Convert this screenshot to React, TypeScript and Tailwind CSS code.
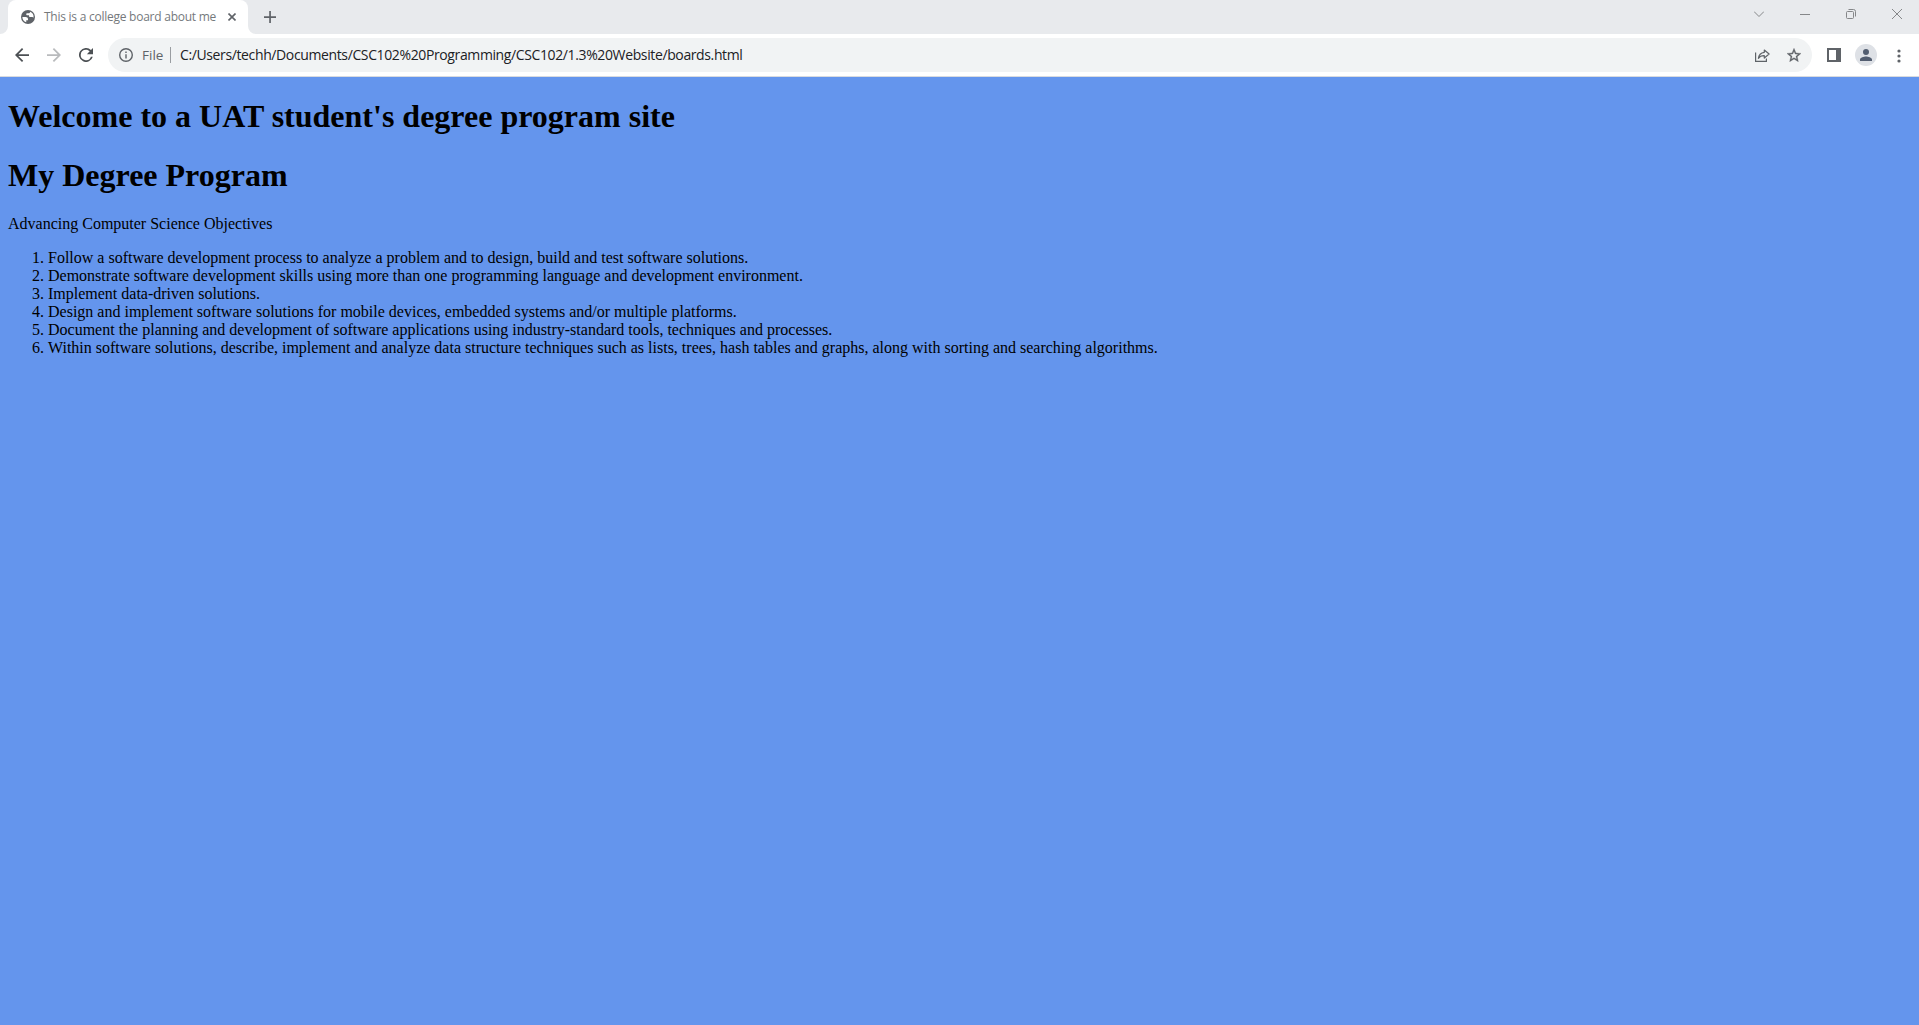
import type { ReactNode } from "react";

type IconProps = { box: string; className: string; children: ReactNode };

function Icon({ box, className, children }: IconProps) {
  return (
    <svg viewBox={box} fill="currentColor" className={`block shrink-0 ${className}`}>
      {children}
    </svg>
  );
}

const objectives = [
  "Follow a software development process to analyze a problem and to design, build and test software solutions.",
  "Demonstrate software development skills using more than one programming language and development environment.",
  "Implement data-driven solutions.",
  "Design and implement software solutions for mobile devices, embedded systems and/or multiple platforms.",
  "Document the planning and development of software applications using industry-standard tools, techniques and processes.",
  "Within software solutions, describe, implement and analyze data structure techniques such as lists, trees, hash tables and graphs, along with sorting and searching algorithms.",
];

function TabStrip() {
  return (
    <div className="flex h-[34px] items-start bg-[#e8eaed]">
      <Icon box="0 0 8 8" className="size-2 self-end text-white">
        <path d="M8 0v8H0a8 8 0 0 0 8-8z" />
      </Icon>
      <div className="flex h-full w-[240px] items-center rounded-t-lg bg-white pl-[13px]">
        <Icon box="2 2 20 20" className="size-[14px] text-[#5f6368]">
          <path
            fillRule="evenodd"
            d="M12 2a10 10 0 1 0 0 20 10 10 0 0 0 0-20zM4 12h4.5c2.4 0 3.5 1 3.5 3v1.5H9.5V19.6A8 8 0 0 1 4 12zM15 4.6A8 8 0 0 1 19.9 13c-.4-.6-1-1-1.9-1h-3c-1 0-1.5-.6-1.5-1.5V9.5H11c-.9 0-1.5-.6-1.5-1.5S10 6.5 11 6.5h2.5c1 0 1.5-.8 1.5-1.9z"
          />
        </Icon>
        <span className="ml-[9px] w-[176px] whitespace-nowrap text-[12px] leading-4 tracking-[-0.25px] text-[#75797c]">
          This is a college board about me
        </span>
        <Icon box="0 0 8 8" className="ml-2 size-2 text-[#5f6368]">
          <path d="M.5.5l7 7M7.5.5l-7 7" fill="none" stroke="currentColor" strokeWidth="1.6" />
        </Icon>
      </div>
      <Icon box="0 0 8 8" className="size-2 self-end text-white">
        <path d="M0 0v8h8a8 8 0 0 1-8-8z" />
      </Icon>
      <Icon box="0 0 12 12" className="ml-2 mt-[11px] size-3 text-[#5f6368]">
        <path d="M5.2 0h1.7v5.2H12v1.7H6.9V12H5.2V6.9H0V5.2h5.2z" />
      </Icon>
      <div className="ml-auto mr-[17px] mt-[9px] flex items-center gap-9 text-[#858789]">
        <Icon box="0 0 10 10" className="size-[10px]">
          <path d="M0 2.5l5 5 5-5" fill="none" stroke="currentColor" />
        </Icon>
        <Icon box="0 0 10 10" className="size-[10px]">
          <path d="M0 5h10v1H0z" />
        </Icon>
        <Icon box="0 0 10 10" className="size-[10px]">
          <g fill="none" stroke="currentColor">
            <rect x=".5" y="2.5" width="7" height="7" rx="1" />
            <path d="M2.5.5h5a2 2 0 0 1 2 2v5" />
          </g>
        </Icon>
        <Icon box="0 0 10 10" className="size-[10px]">
          <path d="M0 0l10 10M10 0L0 10" fill="none" stroke="currentColor" />
        </Icon>
      </div>
    </div>
  );
}

function Toolbar() {
  return (
    <div className="flex h-[43px] items-center border-b border-[#d9dbdf] bg-white pl-[15px] text-[#5f6368]">
      <Icon box="4 4 16 16" className="size-[14px] text-[#4c5054]">
        <path d="M20 11H7.83l5.59-5.59L12 4l-8 8 8 8 1.41-1.41L7.83 13H20v-2z" />
      </Icon>
      <Icon box="4 4 16 16" className="ml-[18px] size-[14px] text-[#b9bbbd]">
        <path d="M12 4l-1.41 1.41L16.17 11H4v2h12.17l-5.58 5.59L12 20l8-8z" />
      </Icon>
      <Icon box="4 4 16 16" className="ml-[18px] size-[14px] text-[#4c5054]">
        <path d="M17.65 6.35A8 8 0 1 0 19.73 14h-2.08A6 6 0 1 1 12 6c1.66 0 3.14.69 4.22 1.78L13 11h7V4l-2.35 2.35z" />
      </Icon>
      <div className="ml-[15px] flex h-[34px] w-[1704px] items-center rounded-full bg-[#f1f3f4] px-[11px]">
        <Icon box="2 2 20 20" className="size-[14px]">
          <path d="M11 7h2v2h-2zm0 4h2v6h-2zm1-9a10 10 0 1 0 0 20 10 10 0 0 0 0-20zm0 18a8 8 0 1 1 0-16 8 8 0 0 1 0 16z" />
        </Icon>
        <span className="ml-[9px] w-7 text-[13.5px] leading-4">File</span>
        <span className="mr-[9px] h-4 w-px bg-[#9a9da1]" />
        <span className="whitespace-nowrap text-[14px] leading-4 tracking-[-0.378px] text-[#202124]">
          C:/Users/techh/Documents/CSC102%20Programming/CSC102/1.3%20Website/boards.html
        </span>
        <Icon box="0 0 15 13" className="ml-auto mt-px h-[13px] w-[15px]">
          <g fill="none" stroke="currentColor" strokeWidth="1.2">
            <path d="M.6 3.5v8.9h10.8V9.5" />
            <path d="M9.3 1l4.8 4-4.8 4V6.7C6.5 6.6 4.7 7.4 3.4 9.3c.4-3.3 2.3-5.5 5.9-6V1z" strokeLinejoin="round" />
          </g>
        </Icon>
        <Icon box="2 2 20 19" className="ml-[17px] h-[14px] w-[14px]">
          <path
            d="M22 9.24l-7.19-.62L12 2 9.19 8.63 2 9.24l5.46 4.73L5.82 21 12 17.27 18.18 21l-1.63-7.03L22 9.24zM12 15.4l-3.76 2.27 1-4.28-3.32-2.88 4.38-.38L12 6.1l1.71 4.04 4.38.38-3.32 2.88 1 4.28L12 15.4z"
            stroke="currentColor"
            strokeWidth=".5"
          />
        </Icon>
      </div>
      <Icon box="0 0 14 14" className="ml-[15px] size-[14px]">
        <path fillRule="evenodd" d="M0 0h14v14H0zM2 2v10h7V2z" />
      </Icon>
      <span className="ml-[14px] flex size-[22px] items-center justify-center rounded-full bg-[#dee1e6]">
        <Icon box="4 4 16 16" className="size-3 text-[#525d70]">
          <path d="M12 12a4 4 0 1 0 0-8 4 4 0 0 0 0 8zm0 2c-2.67 0-8 1.34-8 4v2h16v-2c0-2.66-5.33-4-8-4z" />
        </Icon>
      </span>
      <Icon box="0 0 4 14" className="ml-[19.5px] mt-px h-[14px] w-1">
        <circle cx="2" cy="2" r="1.6" />
        <circle cx="2" cy="7" r="1.6" />
        <circle cx="2" cy="12" r="1.6" />
      </Icon>
    </div>
  );
}

export default function App() {
  return (
    <div className="flex h-screen flex-col overflow-hidden font-['Open_Sans',sans-serif]">
      <TabStrip />
      <Toolbar />
      <main className="flex-1 bg-[#6495ed] px-2 pt-[21.44px] font-['Liberation_Serif',serif] text-[16px] leading-[normal] text-black">
        <h1 className="mb-[21.44px] text-[32px] font-bold">
          Welcome to a UAT student's degree program site
        </h1>
        <h1 className="mb-[21.44px] text-[32px] font-bold">My Degree Program</h1>
        <p className="mb-4">Advancing Computer Science Objectives</p>
        <ol className="list-decimal pl-10">
          {objectives.map((text) => (
            <li key={text}>{text}</li>
          ))}
        </ol>
      </main>
    </div>
  );
}
